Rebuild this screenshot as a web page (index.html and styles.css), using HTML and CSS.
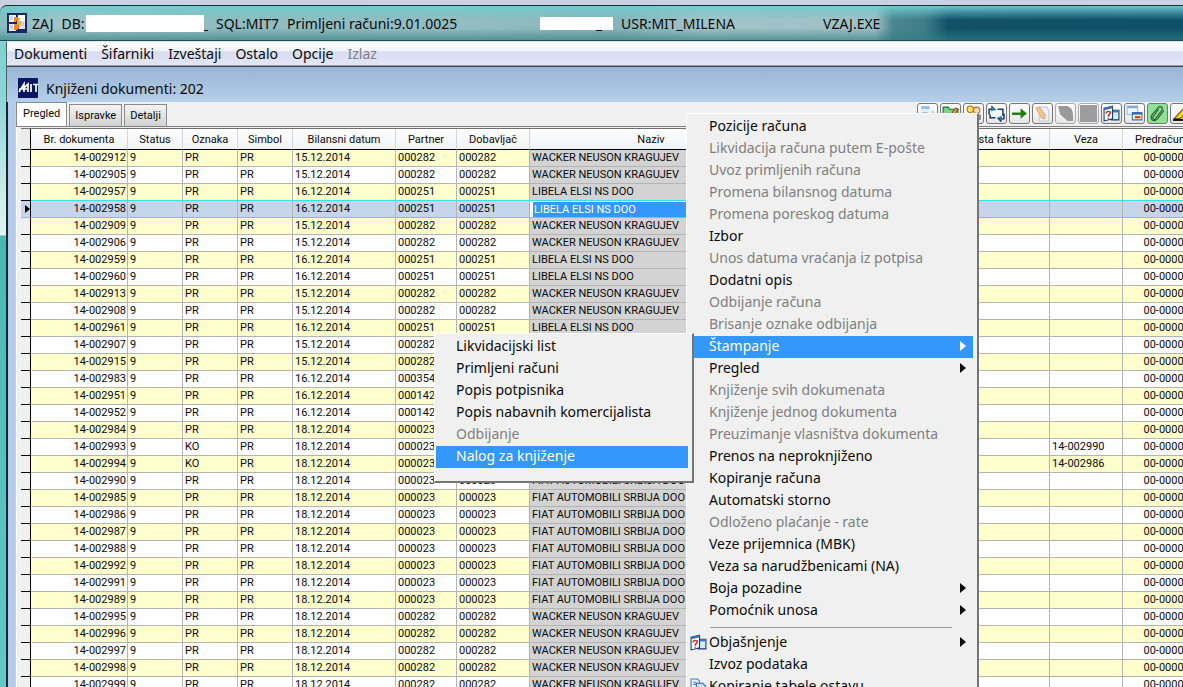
FILE: index.html
```
<!DOCTYPE html>
<html lang="sr-Latn">
<head>
<meta charset="utf-8">
<title>Primljeni računi</title>
<link rel="stylesheet" href="styles.css">
</head>
<body>
<svg class="defs" aria-hidden="true">
  <symbol id="help-windows" viewBox="0 0 16 16">
    <path d="M8 5h7v9H8z" fill="#d8ecfa" stroke="#123c6b"/><path d="M8 5h7v2H8z" fill="#2f7fc4"/>
    <path d="M1 3l8-2v12l-8 2z" fill="#fff" stroke="#123c6b"/><path d="M1 3l8-2v2L1 5z" fill="#2f6fb5"/>
    <path d="M3 8q0-2 2-2t2 1q0 1-2 3v1M5 12v1" fill="none" stroke="#d22" stroke-width="1.4"/>
  </symbol>
</svg>
<div class="window">
  <header class="titlebar">
    <svg class="app-icon" viewBox="0 0 20 20">
      <rect width="20" height="20" fill="#182a63"/>
      <rect x="2" y="2" width="7" height="7" fill="#f4f6ff"/><rect x="2" y="11" width="7" height="7" fill="#e8ecfa"/>
      <rect x="11" y="2" width="7" height="6" fill="#fff"/><rect x="12" y="8" width="6" height="8" fill="#dde2f0"/>
      <path d="M7 4h4l2 2-2 2H9v1H7zM7 11h3l3 3-3 3H7z" fill="#f08a28"/><path d="M10 8h4v4h-4z" fill="#f5a83c"/>
      <path d="M3 4h3M3 6h3M3 13h3M3 15h3M14 10h3M14 12h3" stroke="#aeb8d6"/>
    </svg>
    <div class="t-db"><span>ZAJ</span><span>DB:</span></div>
    <div class="mask mask-db"></div>
    <div class="t-sql"><span class="tail">_</span><span>SQL:MIT7</span><span>Primljeni računi:9.01.0025</span></div>
    <div class="mask mask-user">_</div>
    <div class="t-usr">USR:MIT_MILENA</div>
    <div class="t-exe">VZAJ.EXE</div>
  </header>
  <div class="frame">
    <nav class="menubar">
      <button>Dokumenti</button><button>Šifarniki</button><button>Izveštaji</button><button>Ostalo</button><button>Opcije</button><button disabled>Izlaz</button>
    </nav>
    <div class="caption">
      <svg class="mit" viewBox="0 0 20 20"><rect width="20" height="20" fill="#0b1560"/><path d="M1 14L6 6v8M5 11l5-5v8M13 6v8M15 6.500h5M18 6v8M1 11h8" fill="none" stroke="#fff" stroke-width="1.700"/></svg>
      <h1>Knjiženi dokumenti: 202</h1>
    </div>
    <main class="panel">
      <div class="strip">
        <div class="tabs" role="tablist">
          <button role="tab" aria-selected="true">Pregled</button><button role="tab">Ispravke</button><button role="tab">Detalji</button>
        </div>
        <div class="tools">
          <button aria-label="Pozicije"><svg viewBox="0 0 16 16"><path d="M2 1h8v3H2z" fill="#8cc4e4"/><path d="M2 5h8v9H2z" fill="#e4eef5"/><path d="M12 4l3 3v7h-3z" fill="#c5d3dc"/><path d="M3 7h5M3 9h5" stroke="#a9bccb"/></svg></button>
          <button aria-label="Izmena"><svg viewBox="0 0 16 16"><path d="M1 2h5l1 2h8v10H1z" fill="#7ed088" stroke="#14702a"/><path d="M5 13l8-10 2 1-7 10z" fill="#f6c63c" stroke="#8a3c10"/></svg></button>
          <button aria-label="Korisnici"><svg viewBox="0 0 16 16"><circle cx="5" cy="4" r="3" fill="#ffe066" stroke="#a87800"/><circle cx="11" cy="5" r="3" fill="#ffd9b0" stroke="#a87040"/><path d="M2 8h6v6H2z" fill="#f2b531"/><path d="M8 9h7v5H8z" fill="#8b8d9a"/></svg></button>
          <button aria-label="Slanje"><svg viewBox="0 0 16 16"><path d="M2 5h12v7H2z" fill="#eef8ff"/><path d="M1 9V4h3V2l3 3M9 4h5v6M15 8v5h-3v2l-3-3M7 12H2V9" fill="none" stroke="#1b3a5e" stroke-width="1.400"/><path d="M3 1l4 3-4 2zM13 15l-4-3 4-2z" fill="#2874b8"/></svg></button>
          <button aria-label="Dalje"><svg viewBox="0 0 16 16"><path d="M1 7h8V3l6 5-6 5V9.500H1z" fill="#1f7f0c"/></svg></button>
          <button aria-label="Dokument"><svg viewBox="0 0 16 16"><path d="M5 2h7l2 3v10H5z" fill="#eef1fa" stroke="#c2c9da"/><path d="M2 3l3-1 6 8-1 3-3-1z" fill="#f4c88a" stroke="#d8ae74"/></svg></button>
          <button aria-label="Knjiženje" disabled><svg viewBox="0 0 16 16"><path d="M1 1h8q6 1 6 8v6h-5L3 9z" fill="#999"/></svg></button>
          <button aria-label="Storno" disabled><svg viewBox="0 0 16 16"><path d="M0 0h16v16H0z" fill="#9c9c9c"/></svg></button>
          <button aria-label="Objašnjenje"><svg viewBox="0 0 16 16"><use href="#help-windows"/></svg></button>
          <button aria-label="Prozori"><svg viewBox="0 0 16 16"><path d="M1 1h10v8H1z" fill="#eef5ff" stroke="#9bbce4"/><path d="M1 1h10v2H1z" fill="#7ba8e2"/><path d="M6 7h9v7H6z" fill="#fff3a0" stroke="#3472c8"/><path d="M6 7h9v2H6z" fill="#2f68c4"/><path d="M9 11h4v1H9z" fill="#d33" stroke="#d33"/></svg></button>
          <button aria-label="Prilog" class="green"><svg viewBox="0 0 16 16"><path d="M3 9l6-7q2-1 3 0t0 3l-6 8q-1 1-2 0t0-2l5-7M3 9q-2 3 0 5t5-1l6-8" fill="none" stroke="#2c5934" stroke-width="1.100"/></svg></button>
          <button aria-label="Beleška"><svg viewBox="0 0 16 16"><path d="M2 13l9-10 4 4-8 6z" fill="#ffd21c" stroke="#6b4a00"/><path d="M1 14h14" stroke="#111" stroke-width="2"/></svg></button>
        </div>
      </div>
      <div class="grid-wrap">
        <table class="grid">
          <colgroup><col class="c-head"><col class="c-doc"><col class="c-s"><col class="c-s"><col class="c-s"><col class="c-date"><col class="c-par"><col class="c-dob"><col class="c-naz"><col class="c-gap"><col class="c-vrs"><col class="c-dob"><col class="c-pred"></colgroup>
          <thead><tr><th></th><th>Br. dokumenta</th><th>Status</th><th>Oznaka</th><th>Simbol</th><th>Bilansni datum</th><th>Partner</th><th>Dobavljač</th><th>Naziv</th><th></th><th>Vrsta fakture</th><th>Veza</th><th>Predračun</th></tr></thead>
          <tbody id="rows"></tbody>
        </table>
      </div>
    </main>
  </div>
</div>

<div class="popup main-menu" role="menu">
  <button role="menuitem">Pozicije računa</button>
  <button role="menuitem" disabled>Likvidacija računa putem E-pošte</button>
  <button role="menuitem" disabled>Uvoz primljenih računa</button>
  <button role="menuitem" disabled>Promena bilansnog datuma</button>
  <button role="menuitem" disabled>Promena poreskog datuma</button>
  <button role="menuitem">Izbor</button>
  <button role="menuitem" disabled>Unos datuma vraćanja iz potpisa</button>
  <button role="menuitem">Dodatni opis</button>
  <button role="menuitem" disabled>Odbijanje računa</button>
  <button role="menuitem" disabled>Brisanje oznake odbijanja</button>
  <button role="menuitem" class="sub active">Štampanje</button>
  <button role="menuitem" class="sub">Pregled</button>
  <button role="menuitem" disabled>Knjiženje svih dokumenata</button>
  <button role="menuitem" disabled>Knjiženje jednog dokumenta</button>
  <button role="menuitem" disabled>Preuzimanje vlasništva dokumenta</button>
  <button role="menuitem">Prenos na neproknjiženo</button>
  <button role="menuitem">Kopiranje računa</button>
  <button role="menuitem">Automatski storno</button>
  <button role="menuitem" disabled>Odloženo plaćanje - rate</button>
  <button role="menuitem">Veze prijemnica (MBK)</button>
  <button role="menuitem">Veza sa narudžbenicami (NA)</button>
  <button role="menuitem" class="sub">Boja pozadine</button>
  <button role="menuitem" class="sub">Pomoćnik unosa</button>
  <hr>
  <button role="menuitem" class="sub"><svg class="mi" viewBox="0 0 16 16"><use href="#help-windows"/></svg>Objašnjenje</button>
  <button role="menuitem">Izvoz podataka</button>
  <button role="menuitem"><svg class="mi" viewBox="0 0 16 16"><path d="M1 1h6l2 2v8H1z" fill="#e8f1ff" stroke="#4a7cc4"/><path d="M6 5h6l3 3v7H6z" fill="#cfe2fb" stroke="#2f66b8"/><path d="M3 4h3M3 6h3M8 9h4M8 11h5M8 13h5" stroke="#4a7cc4"/></svg>Kopiranje tabele ostavu</button>
</div>
<div class="popup sub-menu" role="menu">
  <button role="menuitem">Likvidacijski list</button>
  <button role="menuitem">Primljeni računi</button>
  <button role="menuitem">Popis potpisnika</button>
  <button role="menuitem">Popis nabavnih komercijalista</button>
  <button role="menuitem" disabled>Odbijanje</button>
  <button role="menuitem" class="active">Nalog za knjiženje</button>
</div>
<script src="rows.js"></script>
</body>
</html>
```
FILE: rows.js
```
const W = ["000282", "WACKER NEUSON KRAGUJEV"];
const L = ["000251", "LIBELA ELSI NS DOO"];
const F = ["000023", "FIAT AUTOMOBILI SRBIJA DOO"];
const P = ["000354", ""];
const Q = ["000142", ""];

// number, day, partner, type, linked document
const documents = [
  ["2912", 15, W], ["2905", 15, W], ["2957", 16, L], ["2958", 16, L],
  ["2909", 15, W], ["2906", 15, W], ["2959", 16, L], ["2960", 16, L],
  ["2913", 15, W], ["2908", 15, W], ["2961", 16, L], ["2907", 15, W],
  ["2915", 15, W], ["2983", 16, P], ["2951", 16, Q], ["2952", 16, Q],
  ["2984", 18, F], ["2993", 18, F, "KO", "14-002990"], ["2994", 18, F, "KO", "14-002986"],
  ["2990", 18, F], ["2985", 18, F], ["2986", 18, F], ["2987", 18, F], ["2988", 18, F],
  ["2992", 18, F], ["2991", 18, F], ["2989", 18, F], ["2995", 18, W],
  ["2996", 18, W], ["2997", 18, W], ["2998", 18, W], ["2999", 18, W]
];

document.getElementById("rows").innerHTML = documents.map((d, i) => {
  const [no, day, [partner, name], type = "PR", link = ""] = d;
  const current = i === 3;
  const nameCell = current ? `<input aria-label="Naziv" value="${name}">` : name;
  return `<tr class="${current ? "current" : ""}"><td class="rh">${current ? '<i class="marker"></i>' : ""}</td>` +
    `<td class="num">14-00${no}</td><td>9</td><td>${type}</td><td>PR</td><td>${day}.12.2014</td>` +
    `<td>${partner}</td><td>${partner}</td><td class="name">${nameCell}</td><td></td><td></td>` +
    `<td>${link}</td><td class="num">00-000000</td></tr>`;
}).join("");
```
FILE: styles.css
```
* { box-sizing: border-box; }
html, body { height: 100%; }
body {
  margin: 0;
  overflow: hidden;
  position: relative;
  background: #c9d1e3;
  font-family: "Noto Sans", "Open Sans", sans-serif;
  font-size: 14px;
  color: #0a0a0a;
}
button { font: inherit; color: inherit; border: 0; background: none; padding: 0; margin: 0; text-align: left; white-space: nowrap; }
.defs { display: none; }

.window {
  height: 100%;
  padding-top: 5px;
  display: flex;
  flex-direction: column;
}
.titlebar {
  display: flex;
  align-items: center;
  flex: none;
  height: 36px;
  padding-left: 7px;
  border-top: 1px solid #14343a;
  border-bottom: 1px solid #1f4a50;
  border-top-left-radius: 7px;
  white-space: nowrap;
  background:
    linear-gradient(180deg, rgba(110,205,208,.95) 0, rgba(110,200,204,.4) 8px, transparent 14px, transparent 22px, rgba(50,125,128,.6) 33px),
    linear-gradient(90deg, #86bcc0 0, #a3c4c8 60px, #8fbcc0 220px, #93bdc1 460px, #86b6bb 620px, #a2c3c8 700px, #9fc0c6 875px, #4b8792 893px, #3f7d8a 925px, #125168 948px, #0f5068 100%);
}
.app-icon { width: 20px; height: 20px; }
.t-db, .t-sql { display: flex; gap: 8px; }
.t-db { width: 54px; margin-left: 5px; }
.mask { background: #fff; }
.mask-db { width: 118px; height: 17px; }
.t-sql { width: 336px; }
.tail { width: 4px; overflow: hidden; }
.mask-user { width: 73px; height: 13px; line-height: 13px; padding-left: 56px; }
.t-usr { width: 202px; margin-left: 8px; }

.frame {
  flex: 1;
  min-height: 0;
  display: flex;
  flex-direction: column;
  padding-left: 6px;
  background: linear-gradient(180deg, #7fd0d0 0, #8fd6d6 60px, #c4eae6 140px, #e3f3f0 194px, #48b8b2 195px, #50bdb8 300px, #62c8c6 100%);
}
.menubar {
  display: flex;
  align-items: center;
  gap: 14px;
  flex: none;
  height: 25px;
  padding-left: 7px;
  border-left: 1px solid #43666b;
  border-top: 1px solid #d6eff0;
  border-bottom: 1px solid #9a9eaa;
  background: linear-gradient(180deg, #fff 0, #eff2fa 9px, #d8dcef 10px, #e3e7f6 24px);
}
.menubar button:disabled { color: #7e808a; }
.caption {
  display: flex;
  align-items: center;
  gap: 8px;
  flex: none;
  height: 36px;
  padding: 7px 0 0 11px;
  border-top: 1px solid #3b4654;
  border-left: 1px solid #43666b;
  background: linear-gradient(180deg, #9ab4d3, #b4cfea);
}
.mit { width: 20px; height: 20px; }
.caption h1 { margin: 0; font-size: 14px; font-weight: 400; }
.panel {
  flex: 1;
  min-height: 0;
  display: flex;
  flex-direction: column;
  border-left: 2px solid #142630;
  background: linear-gradient(90deg, #b4cce9 7px, #8f9dae 7px, #fff 8px, #f0f0f0 9px);
  padding-left: 8px;
  font-family: Roboto, "Liberation Sans", sans-serif;
  font-size: 11px;
}
.strip { display: flex; flex: none; height: 25px; }
.tabs { display: flex; align-items: flex-end; gap: 2px; border-bottom: 1px solid #808080; flex: 1; }
.tabs button {
  height: 22px;
  padding: 0 5px;
  text-align: center;
  border: 1px solid #8a8a8a;
  border-bottom: 0;
  background: linear-gradient(180deg, #f3f3f3, #d2d2d2);
}
.tabs button[aria-selected] { height: 24px; padding: 0 6px 2px; background: #fff; }
.tools {
  display: flex;
  gap: 2px;
  padding-top: 1px;
  margin-right: -8px;
  border-bottom: 1px solid #808080;
}
.tools button {
  width: 21px;
  height: 21px;
  padding: 1px;
  border: 1px solid #777;
  border-radius: 3px;
  background: linear-gradient(180deg, #fff, #e6e6e6);
}
.tools button:disabled { border-color: #aaa; }
.tools .green { background: #8fe296; }
.tools svg { display: block; width: 17px; height: 17px; }

.grid-wrap { flex: 1; min-height: 0; overflow: hidden; border-left: 1px solid #fff; padding: 1px 0 0 4px; }
.grid { table-layout: fixed; width: 1177px; border-collapse: separate; border-spacing: 0; border-top: 1px solid #707070; }
.c-head { width: 10px; } .c-doc { width: 97px; } .c-s { width: 55px; } .c-date { width: 103px; }
.c-par { width: 61px; } .c-dob { width: 73px; } .c-naz { width: 243px; } .c-gap { width: 177px; }
.c-vrs { width: 100px; } .c-pred { width: 75px; }
.grid th {
  height: 21px;
  padding: 0;
  font-weight: 400;
  text-align: center;
  border-right: 1px solid #d4d4d4;
  border-bottom: 1px solid #000;
  background: linear-gradient(180deg, #fff, #f1f2f4);
}
.grid th:first-child { background: #ececec; border-right-color: #000; }
.grid td {
  height: 17px;
  padding: 0 2px;
  line-height: 14px;
  overflow: hidden;
  white-space: nowrap;
  border-right: 1px solid #b4b4b4;
  border-bottom: 1px solid #b4b4b4;
  background: #fff;
}
.grid tr:nth-child(odd) td { background: #ffffce; }
.grid tr td.name, .grid tr:nth-child(odd) td.name { background: #d3d3d3; }
.grid tr td.rh, .grid tr:nth-child(odd) td.rh { padding: 0; background: #f0f0f0; border-color: #000; }
.grid .num { text-align: right; padding-right: 1px; }
.grid tr.current td { background: #c7d5ea; border-bottom-color: #2ee6ea; box-shadow: 0 -1px #2ee6ea; }
.grid tr.current td.rh { box-shadow: none; }
.grid tr.current td.name { padding: 0; }
.grid input {
  display: block;
  width: 100%;
  height: 16px;
  padding: 0 1px;
  border: 0;
  border-left: 3px solid #fff;
  border-top: 1px solid #fff;
  background: #3397fb;
  color: #fff;
  font: inherit;
}
.marker { display: block; margin-left: 4px; width: 0; border: 4px solid transparent; border-left: 5px solid #000; border-right: 0; }

.popup {
  position: absolute;
  display: flex;
  flex-direction: column;
  padding-top: 2px;
  border: 1px solid #fff;
  border-right: 2px solid #757575;
  border-bottom: 2px solid #757575;
  background: #f0f0f0;
}
.main-menu { left: 686px; top: 113px; width: 293px; }
.sub-menu { left: 434px; top: 333px; width: 260px; padding-bottom: 13px; }
.popup button {
  position: relative;
  height: 22px;
  line-height: 20px;
  padding-bottom: 2px;
  margin: 0 4px 0 1px;
  padding-left: 21px;
}
.sub-menu button { padding-left: 20px; }
.popup button:disabled { color: #7f7f7f; }
.popup button.active { background: #3397fb; color: #fff; }
.popup .sub::after {
  content: "";
  position: absolute;
  right: 7px;
  top: 5px;
  border: 5px solid transparent;
  border-left: 6px solid currentColor;
  border-right: 0;
}
.popup hr { width: 242px; height: 1px; margin: 5px 0 4px 23px; border: 0; background: #9c9c9c; }
.mi { position: absolute; left: 2px; top: 2px; width: 17px; height: 17px; }
```
